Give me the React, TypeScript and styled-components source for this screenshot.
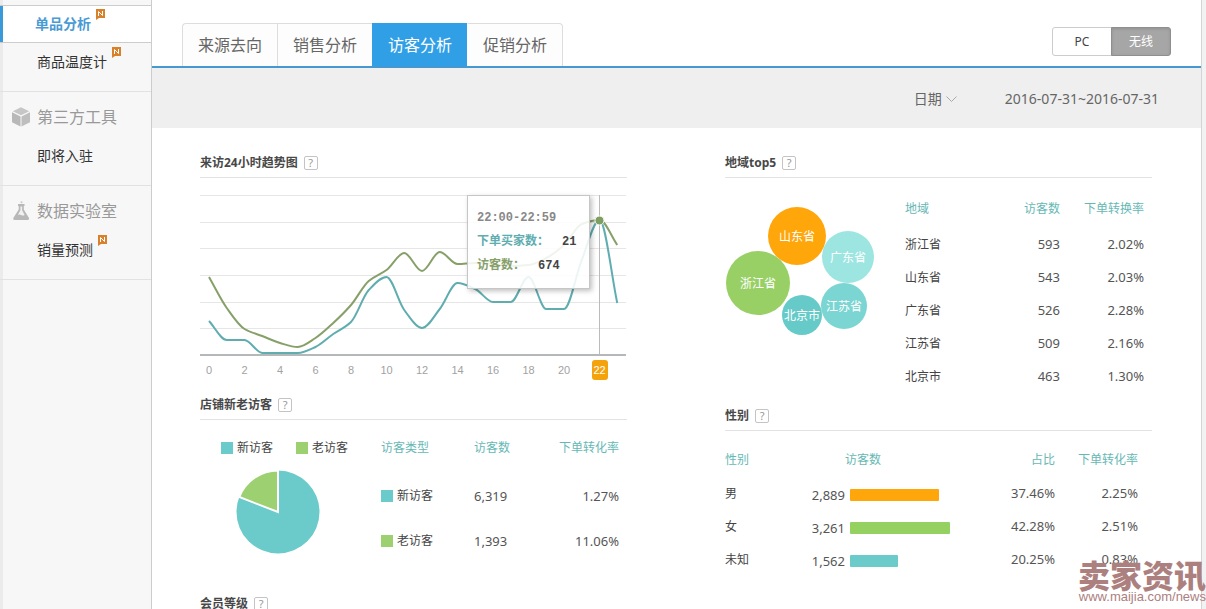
import React from 'react';
import styled, { createGlobalStyle } from 'styled-components';

const teal = '#6bcaca';
const green = '#9dd070';
const orange = '#ffa60a';
const headTeal = '#66b8b5';

const GlobalStyle = createGlobalStyle`
  *, *::before, *::after { box-sizing: border-box; }
  body {
    margin: 0;
    background: #f2f2f2;
    color: #444;
    font: 12px/20px "Noto Sans", "Noto Sans CJK SC", sans-serif;
  }
  button, select { font: inherit; color: inherit; margin: 0; padding: 0; border: 0; background: none; }
  a { color: inherit; text-decoration: none; }
  ul { list-style: none; margin: 0; padding: 0; }
`;

const Page = styled.div`
  position: relative;
  display: grid;
  grid-template-columns: 152px minmax(0, 1fr) 5px;
  height: 100vh;
  overflow: hidden;
`;

/* ---------- sidebar ---------- */

const Sidebar = styled.nav`
  padding-top: 5px;
  background: #f7f7f7;
  border-right: 1px solid #ccc;
  box-shadow: inset 3px 0 0 #ebebeb;
`;

const Group = styled.section`
  border-bottom: 1px solid #e2e2e2;
  padding-bottom: 10px;
`;

const GroupTitle = styled.h2`
  display: flex;
  align-items: center;
  gap: 6px;
  height: 45px;
  margin: 0;
  padding: 5px 0 0 11px;
  font-size: 16px;
  font-weight: 400;
  color: #999;
`;

const MenuItem = styled.li<{ $active?: boolean }>`
  display: flex;
  align-items: center;
  height: 38px;
  padding-left: 37px;
  font-size: 14px;
  font-weight: ${p => (p.$active ? 700 : 400)};
  color: ${p => (p.$active ? '#4a9ad4' : '#333')};
  ${p => p.$active && `
    background: #fff;
    border: solid #ccc;
    border-width: 1px 0;
    box-shadow: inset 3px 0 0 #3a9ad9;
    padding-left: 35px;
  `}
`;

const MenuLink = styled.a`
  position: relative;
`;

const Badge = styled.svg`
  position: absolute;
  left: 100%;
  top: -5px;
  width: 9px;
  height: 11px;
  margin-left: 5px;
`;

const NewBadge = () => (
  <Badge viewBox="0 0 9 11" aria-hidden="true">
    <path d="M0 0h9v9H3L0 11z" fill="#d9812a" />
    <path d="M2.5 7V2.5L6.5 6.5V2" fill="none" stroke="#fff" strokeWidth="1" />
  </Badge>
);

const CubeIcon = () => (
  <svg width="20" height="20" viewBox="0 0 20 20" aria-hidden="true">
    <path d="M10 .3l8.200 4L10 8.300 1.800 4.300z" fill="#c6c6c6" />
    <path d="M1 5.300l8.500 4.200V19.500L1 15.300z" fill="#b8b8b8" />
    <path d="M19 5.300l-8.500 4.200V19.500L19 15.300z" fill="#bebebe" />
  </svg>
);

const FlaskIcon = () => (
  <svg width="20" height="20" viewBox="0 0 20 20" aria-hidden="true">
    <path d="M7 3h6.500v2h-.7v3.500L18 17q.6 2-1.300 2H3.600q-1.900 0-1.300-2L7.700 8.500V5H7z" fill="#b8b8b8" />
    <path d="M9.400 5.500h1.700v3.800l2.500 4.700q-1.700 1-3.400 0t-3.300 0l2.500-4.700z" fill="#f1f1f1" />
    <circle cx="10.500" cy="1.300" r="1" fill="#c8c8c8" />
  </svg>
);

/* ---------- top area ---------- */

const Main = styled.main`
  min-width: 0;
  background: #fff;
`;

const Edge = styled.div`
  border-left: 1px solid #d4d4d4;
`;

const TopBar = styled.header`
  display: flex;
  justify-content: space-between;
  align-items: flex-end;
  height: 68px;
  padding: 0 30px;
  border-bottom: 2px solid #4598d0;
`;

const Tabs = styled.div`
  display: flex;
`;

const Tab = styled.button<{ $active?: boolean }>`
  height: 43px;
  padding: 0 15px 1px;
  border: solid ${p => (p.$active ? '#319fe6' : '#ddd')};
  border-width: 1px 0 0 1px;
  background: ${p => (p.$active ? '#319fe6' : '#fdfdfd')};
  color: ${p => (p.$active ? '#fff' : '#666')};
  font-size: 16px;
  &:first-child { border-top-left-radius: 4px; }
  &:last-child { border-right-width: 1px; border-left-color: transparent; border-top-right-radius: 4px; }
`;

const Toggle = styled.div`
  display: flex;
  margin-bottom: 10px;
`;

const ToggleButton = styled.button<{ $active?: boolean }>`
  width: 60px;
  height: 29px;
  border: 1px solid ${p => (p.$active ? '#8f8f8f' : '#ccc')};
  border-radius: ${p => (p.$active ? '0 3px 3px 0' : '3px 0 0 3px')};
  background: ${p => (p.$active ? '#a6a6a6' : '#fff')};
  color: ${p => (p.$active ? '#fff' : '#444')};
  box-shadow: ${p => (p.$active ? 'inset 0 1px 3px #909090' : 'none')};
  & + & { margin-left: -1px; }
`;

const FilterBar = styled.div`
  display: flex;
  justify-content: flex-end;
  align-items: center;
  gap: 48px;
  height: 60px;
  padding: 2px 42px 0;
  background: #efefef;
  color: #666;
  font-size: 14px;
`;

const DateField = styled.label`
  display: flex;
  align-items: center;
  gap: 4px;
`;

const DateSelect = styled.select`
  width: 28px;
  height: 22px;
  appearance: none;
  outline: 0;
`;

/* ---------- panels ---------- */

const Columns = styled.div`
  display: grid;
  grid-template-columns: minmax(0, 1fr) minmax(0, 1fr);
  gap: 98px;
  padding: 19px 49px 0 48px;
`;

const PanelHead = styled.div`
  display: flex;
  align-items: center;
  gap: 6px;
  height: 31px;
  padding-top: 2px;
  border-bottom: 1px solid #e2e2e2;
`;

const PanelTitle = styled.h3`
  margin: 0;
  font-size: 12px;
  font-weight: 700;
  color: #484848;
`;

const Help = styled.button`
  width: 14px;
  height: 14px;
  border: 1px solid #c4c4c4;
  border-radius: 2px;
  color: #999;
  font-size: 11px;
  line-height: 12px;
`;

const Head = ({ title }: { title: string }) => (
  <PanelHead>
    <PanelTitle>{title}</PanelTitle>
    <Help aria-label={`${title}说明`}>?</Help>
  </PanelHead>
);

const PanelBody = styled.div<{ $top?: number; $bottom?: number }>`
  display: flex;
  align-items: flex-start;
  padding: ${p => p.$top ?? 0}px 0 ${p => p.$bottom ?? 0}px;
`;

const Table = styled.table<{ $head: number; $row: number; $edge: number }>`
  flex: 1;
  min-width: 0;
  width: 100%;
  table-layout: fixed;
  border-collapse: collapse;
  th, td { padding: 0; text-align: left; white-space: nowrap; }
  th { height: ${p => p.$head}px; padding-top: 2px; font-weight: 400; color: ${headTeal}; }
  td { height: ${p => p.$row}px; padding-bottom: 2px; font-size: 13px; color: #555; }
  td:first-child { padding-bottom: 0; font-size: 12px; color: #444; }
  th:last-child, td:last-child { padding-right: ${p => p.$edge}px; }
  .num { text-align: right; }
`;

const Swatch = styled.span<{ $color: string }>`
  display: inline-flex;
  align-items: center;
  gap: 4px;
  color: #444;
  &::before { content: ''; width: 12px; height: 12px; background: ${p => p.$color}; }
`;

/* ---------- trend chart ---------- */

const ChartBox = styled.div`
  position: relative;
`;

const Drawing = styled.svg`
  display: block;
  width: 100%;
  height: auto;
  overflow: visible;
`;

const Tick = styled.text<{ $on: boolean }>`
  font: 11px "Liberation Sans", sans-serif;
  text-anchor: middle;
  fill: ${p => (p.$on ? '#fff' : '#a2a2a2')};
`;

const Tooltip = styled.div`
  position: absolute;
  right: 37px;
  top: 17px;
  width: 123px;
  padding: 10px 10px 10px 9px;
  border: 1px solid #c6c6c6;
  background: rgba(255, 255, 255, 0.88);
  box-shadow: 2px 2px 5px rgba(0, 0, 0, 0.25);
  font: 700 12px/24px "Liberation Mono", "Noto Sans CJK SC", monospace;
  color: #888;
  white-space: nowrap;
`;

const TipLine = styled.div<{ $color: string }>`
  display: flex;
  gap: 13px;
  color: ${p => p.$color};
  b { color: #444; }
`;

const visitors = [99, 130, 151, 158, 165, 169, 160, 145, 127, 103, 92, 75, 93, 74, 86, 85, 86, 88, 87, 80, 67, 46, 42, 67];
const buyers = [143, 162, 162, 175, 175, 175, 169, 156, 144, 112, 99, 132, 150, 131, 105, 111, 124, 124, 99, 131, 131, 82, 42, 125];

const step = 17.75;
const hourX = (i: number) => 9 + i * step;

/* Monotone cubic path, so peaks and flats stay on their values. */
function smooth(ys: number[]): string {
  const d = ys.slice(1).map((y, i) => y - ys[i]);
  const m = ys.map((_, i) => {
    if (i === 0) return d[0];
    if (i === ys.length - 1) return d[i - 1];
    if (d[i - 1] * d[i] <= 0) return 0;
    return (2 * d[i - 1] * d[i]) / (d[i - 1] + d[i]);
  });
  return ys.slice(1).reduce(
    (path, y, i) =>
      `${path}C${hourX(i) + step / 3} ${ys[i] + m[i] / 3} ${hourX(i + 1) - step / 3} ${y - m[i + 1] / 3} ${hourX(i + 1)} ${y}`,
    `M${hourX(0)} ${ys[0]}`,
  );
}

const TrendChart = () => (
  <ChartBox>
    <Drawing viewBox="0 0 427 211" role="img" aria-label="来访24小时趋势图">
      {[17, 44, 70, 97, 124, 150].map(y => (
        <rect key={y} x="0" y={y} width="426" height="1" fill="#e6e6e6" />
      ))}
      <rect x="0" y="176" width="426" height="2" fill="#b4b8b8" />
      <rect x="399" y="17" width="1" height="160" fill="#bbb" />
      <path d={smooth(buyers)} fill="none" stroke="#60adb0" strokeWidth="2" />
      <path d={smooth(visitors)} fill="none" stroke="#87a069" strokeWidth="2" />
      <circle cx="399.500" cy="42.500" r="4.500" fill="#7d9f62" stroke="#fff" />
      <rect x="392" y="182" width="16" height="20" rx="3" fill="#f5a30d" />
      {Array.from({ length: 12 }, (_, i) => i * 2).map(h => (
        <Tick key={h} x={hourX(h)} y="196" $on={h === 22}>{h}</Tick>
      ))}
    </Drawing>
    <Tooltip role="tooltip">
      <div>22:00-22:59</div>
      <TipLine $color="#60adb0"><span>下单买家数：</span><b>21</b></TipLine>
      <TipLine $color="#87a069"><span>访客数：</span><b>674</b></TipLine>
    </Tooltip>
  </ChartBox>
);

/* ---------- new / returning visitors ---------- */

const PieSide = styled.div`
  flex: none;
  width: 181px;
  padding: 18px 0 0 21px;
`;

const Legend = styled.div`
  display: flex;
  gap: 23px;
`;

const Pie = styled.svg`
  display: block;
  width: 84px;
  height: 84px;
  margin: 12px 0 0 15px;
`;

/* ---------- regions ---------- */

const Bubbles = styled.svg`
  flex: none;
  width: 180px;
  height: 160px;
`;

const BubbleText = styled.text`
  font-size: 12px;
  text-anchor: middle;
  fill: #fff;
`;

const bubbles = [
  { name: '山东省', x: 72, y: 48, r: 29, color: orange },
  { name: '广东省', x: 123, y: 69, r: 26, color: '#9de5e1' },
  { name: '浙江省', x: 33, y: 95, r: 32, color: '#98d066' },
  { name: '江苏省', x: 119, y: 118, r: 23, color: '#7bd5d2' },
  { name: '北京市', x: 77, y: 127, r: 20, color: '#66cac8' },
];

const regions = [
  ['浙江省', '593', '2.02%'],
  ['山东省', '543', '2.03%'],
  ['广东省', '526', '2.28%'],
  ['江苏省', '509', '2.16%'],
  ['北京市', '463', '1.30%'],
];

/* ---------- gender ---------- */

const genders = [
  { name: '男', count: '2,889', bar: 89, color: orange, share: '37.46%', rate: '2.25%' },
  { name: '女', count: '3,261', bar: 100, color: '#94d160', share: '42.28%', rate: '2.51%' },
  { name: '未知', count: '1,562', bar: 48, color: teal, share: '20.25%', rate: '0.83%' },
];

const CountCell = styled.div`
  display: flex;
  align-items: center;
  gap: 5px;
  padding-top: 5px;
`;

const Count = styled.span`
  display: flex;
  justify-content: flex-end;
  width: 32px;
`;

const Bar = styled.span<{ $color: string }>`
  height: 12px;
  border-radius: 1px;
  background: ${p => p.$color};
`;

const CountHead = styled.th`
  && { padding-left: 32px; }
`;

const RegionPanel = styled.section`
  padding-bottom: 7px;
`;

/* ---------- site mark ---------- */

const SiteMark = styled.div`
  position: absolute;
  right: 0;
  bottom: 4px;
  color: #ad8080;
  font: 13px/16px "Liberation Sans", sans-serif;
  text-align: right;
  white-space: nowrap;
  pointer-events: none;
  strong {
    display: block;
    font: 900 32px/30px "Noto Sans CJK SC", sans-serif;
  }
`;

export default function App() {
  return (
    <>
      <GlobalStyle />
      <Page>
        <Sidebar>
          <Group>
            <ul>
              <MenuItem $active><MenuLink href="#item">单品分析<NewBadge /></MenuLink></MenuItem>
              <MenuItem><MenuLink href="#thermo">商品温度计<NewBadge /></MenuLink></MenuItem>
            </ul>
          </Group>
          <Group>
            <GroupTitle><CubeIcon />第三方工具</GroupTitle>
            <ul>
              <MenuItem><MenuLink href="#soon">即将入驻</MenuLink></MenuItem>
            </ul>
          </Group>
          <Group>
            <GroupTitle><FlaskIcon />数据实验室</GroupTitle>
            <ul>
              <MenuItem><MenuLink href="#forecast">销量预测<NewBadge /></MenuLink></MenuItem>
            </ul>
          </Group>
        </Sidebar>

        <Main>
          <TopBar>
            <Tabs>
              <Tab>来源去向</Tab>
              <Tab>销售分析</Tab>
              <Tab $active>访客分析</Tab>
              <Tab>促销分析</Tab>
            </Tabs>
            <Toggle>
              <ToggleButton>PC</ToggleButton>
              <ToggleButton $active>无线</ToggleButton>
            </Toggle>
          </TopBar>
          <FilterBar>
            <DateField>
              <DateSelect aria-label="日期"><option>日期</option></DateSelect>
              <svg width="11" height="7" viewBox="0 0 11 7" aria-hidden="true">
                <path d="M.5.5l5 5 5-5" fill="none" stroke="#aaa" />
              </svg>
            </DateField>
            <span>2016-07-31~2016-07-31</span>
          </FilterBar>

          <Columns>
            <div>
              <section>
                <Head title="来访24小时趋势图" />
                <TrendChart />
              </section>
              <section>
                <Head title="店铺新老访客" />
                <PanelBody $bottom={24}>
                  <PieSide>
                    <Legend>
                      <Swatch $color={teal}>新访客</Swatch>
                      <Swatch $color={green}>老访客</Swatch>
                    </Legend>
                    <Pie viewBox="0 0 84 84" role="img" aria-label="新老访客占比">
                      <circle cx="42" cy="42" r="41.500" fill={teal} />
                      <path d="M42 42V-1H-2V25.500z" fill="#fff" />
                      <path d="M42 42V.5A41.500 41.500 0 0 0 3.300 27z" fill={green} stroke="#fff" strokeWidth="2" />
                    </Pie>
                  </PieSide>
                  <Table $head={54} $row={45} $edge={8}>
                    <colgroup><col style={{ width: 93 }} /><col style={{ width: 60 }} /><col /></colgroup>
                    <thead>
                      <tr><th>访客类型</th><th>访客数</th><th className="num">下单转化率</th></tr>
                    </thead>
                    <tbody>
                      <tr><td><Swatch $color={teal}>新访客</Swatch></td><td>6,319</td><td className="num">1.27%</td></tr>
                      <tr><td><Swatch $color={green}>老访客</Swatch></td><td>1,393</td><td className="num">11.06%</td></tr>
                    </tbody>
                  </Table>
                </PanelBody>
              </section>
              <section>
                <Head title="会员等级" />
              </section>
            </div>

            <div>
              <RegionPanel>
                <Head title="地域top5" />
                <PanelBody $top={10}>
                  <Bubbles viewBox="0 10 180 160" role="img" aria-label="地域分布">
                    {bubbles.map(b => (
                      <g key={b.name}>
                        <circle cx={b.x} cy={b.y + 10} r={b.r} fill={b.color} />
                        <BubbleText x={b.x} y={b.y + 15}>{b.name}</BubbleText>
                      </g>
                    ))}
                  </Bubbles>
                  <Table $head={40} $row={33} $edge={8}>
                    <colgroup><col style={{ width: 95 }} /><col style={{ width: 60 }} /><col /></colgroup>
                    <thead>
                      <tr><th>地域</th><th className="num">访客数</th><th className="num">下单转换率</th></tr>
                    </thead>
                    <tbody>
                      {regions.map(([name, count, rate]) => (
                        <tr key={name}><td>{name}</td><td className="num">{count}</td><td className="num">{rate}</td></tr>
                      ))}
                    </tbody>
                  </Table>
                </PanelBody>
              </RegionPanel>
              <section>
                <Head title="性别" />
                <PanelBody $top={10}>
                  <Table $head={36} $row={33} $edge={14}>
                    <colgroup><col style={{ width: 88 }} /><col /><col style={{ width: 60 }} /><col style={{ width: 97 }} /></colgroup>
                    <thead>
                      <tr><th>性别</th><CountHead>访客数</CountHead><th className="num">占比</th><th className="num">下单转化率</th></tr>
                    </thead>
                    <tbody>
                      {genders.map(g => (
                        <tr key={g.name}>
                          <td>{g.name}</td>
                          <td>
                            <CountCell>
                              <Count>{g.count}</Count>
                              <Bar $color={g.color} style={{ width: g.bar }} />
                            </CountCell>
                          </td>
                          <td className="num">{g.share}</td>
                          <td className="num">{g.rate}</td>
                        </tr>
                      ))}
                    </tbody>
                  </Table>
                </PanelBody>
              </section>
            </div>
          </Columns>
        </Main>
        <Edge />
        <SiteMark>
          <strong>卖家资讯</strong>
          www.maijia.com/news
        </SiteMark>
      </Page>
    </>
  );
}
